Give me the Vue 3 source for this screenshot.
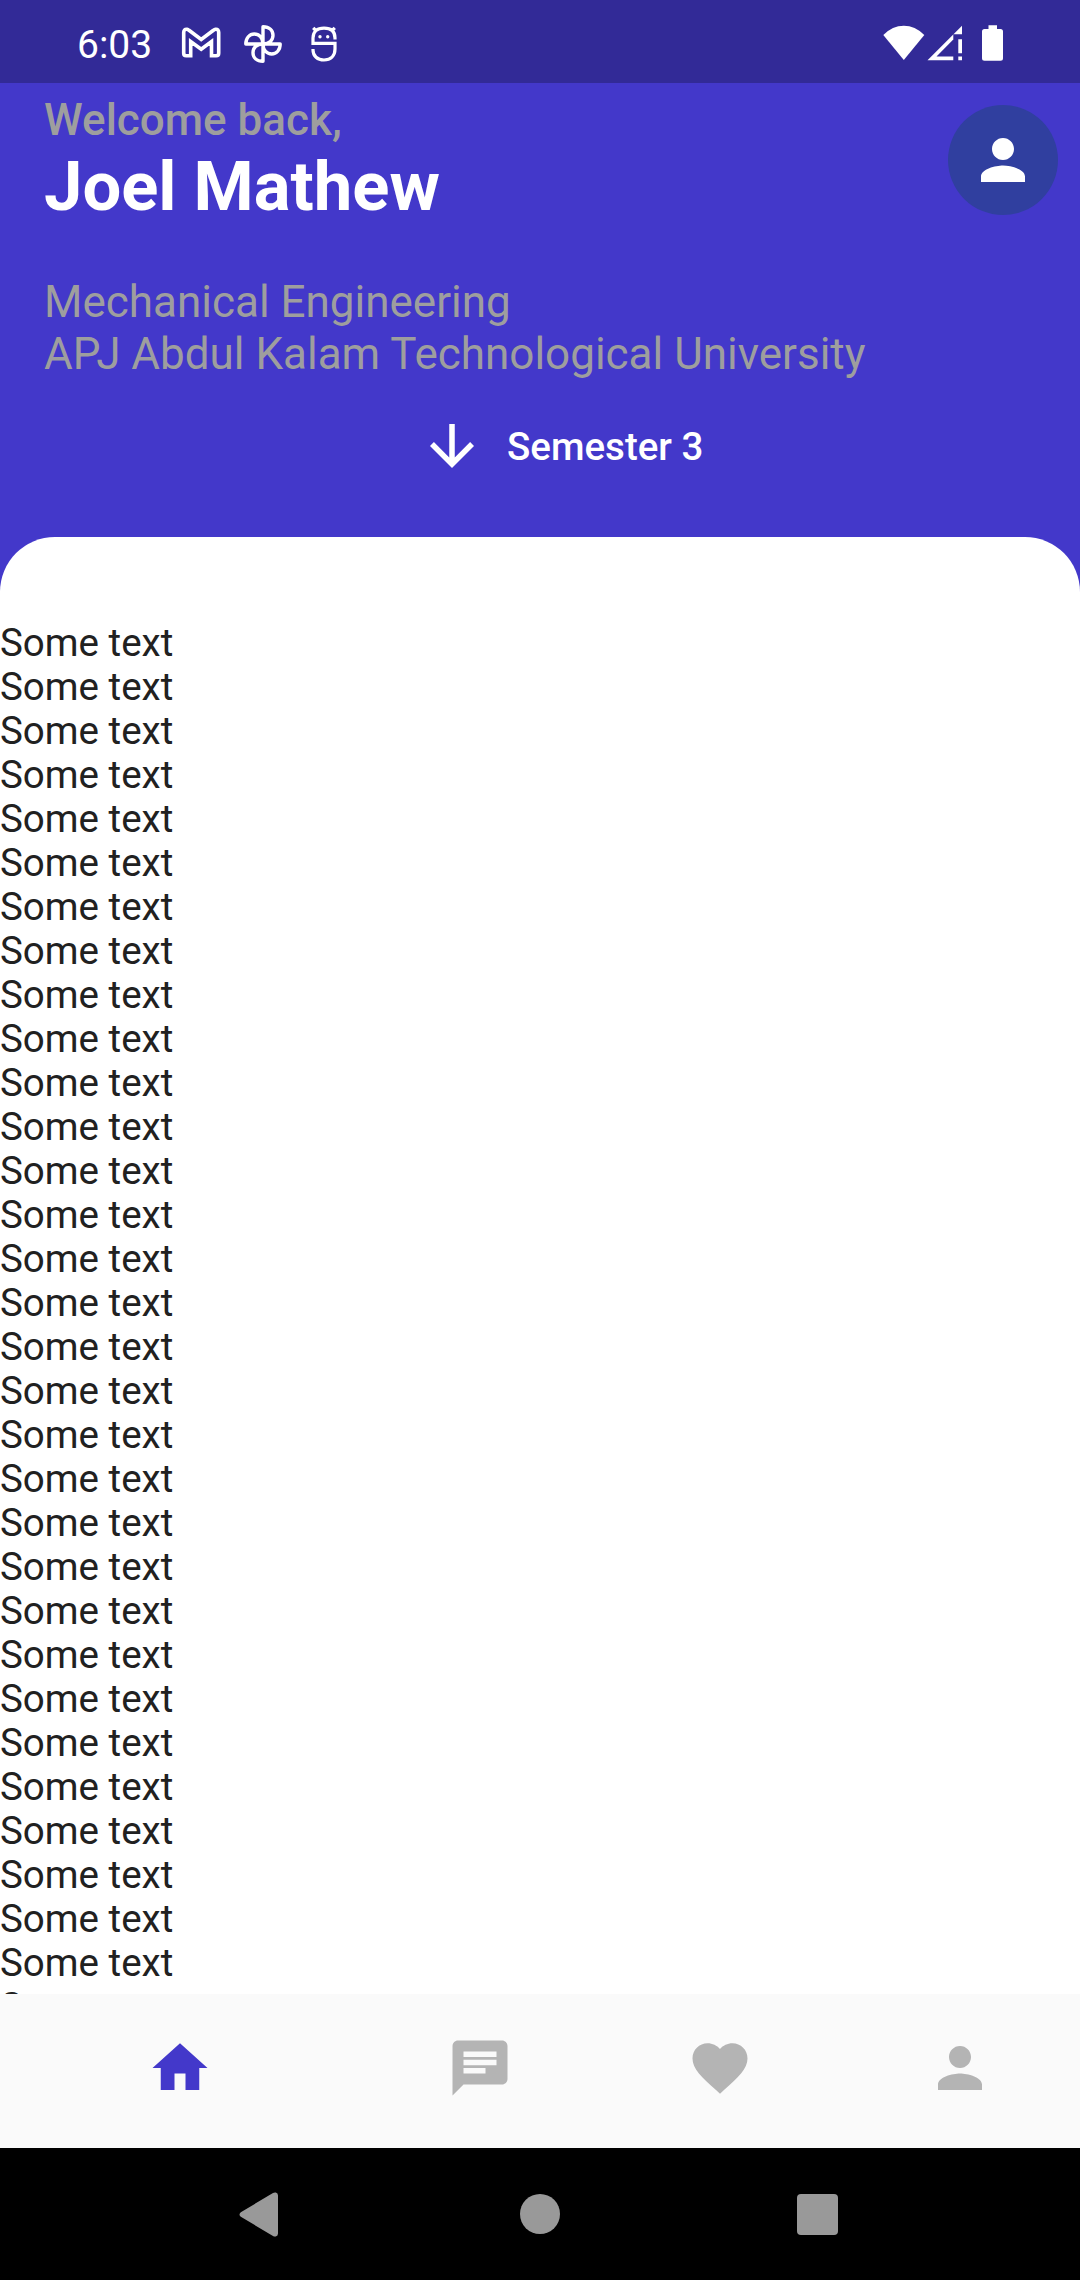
<script setup>
const lines = Array.from({ length: 32 }, () => 'Some text')
const tabs = [
  { name: 'home', active: true, path: 'M10 20v-6h4v6h5v-8h3L12 3 2 12h3v8z' },
  { name: 'chat', active: false, path: 'M20 2H4c-1.1 0-1.99.9-1.99 2L2 22l4-4h14c1.1 0 2-.9 2-2V4c0-1.1-.9-2-2-2zM6 9h12v2H6V9zm8 5H6v-2h8v2zm4-6H6V6h12v2z' },
  { name: 'favorites', active: false, path: 'M12 21.35l-1.45-1.32C5.4 15.36 2 12.28 2 8.5 2 5.42 4.42 3 7.5 3c1.74 0 3.41.81 4.5 2.09C13.09 3.81 14.76 3 16.5 3 19.58 3 22 5.42 22 8.5c0 3.78-3.4 6.86-8.55 11.54L12 21.35z' },
  { name: 'profile', active: false, path: 'M12 12c2.21 0 4-1.79 4-4s-1.79-4-4-4-4 1.79-4 4 1.79 4 4 4zm0 2c-2.67 0-8 1.34-8 4v2h16v-2c0-2.66-5.33-4-8-4z' },
]
</script>

<template>
  <div class="screen">
    <div class="status">
      <span class="time">6:03</span>
      <svg class="gmail" width="40" height="32" viewBox="0 0 40 32">
        <path d="M6.6 28.8H5.2Q2.7 28.8 2.7 26.3V5.6Q2.7 2 6 2.3Q7 2.5 8 3.3L20.2 12.5L32.4 3.3Q33.4 2.5 34.6 2.3Q37.7 2 37.7 5.6V26.3Q37.7 28.8 35.2 28.8H30.5V14.5L20.2 22.3L9.7 14.5V28.8Z" />
      </svg>
      <svg class="photos" width="40" height="40" viewBox="0 0 40 40">
        <path d="M20 20V2.8C26.5 2.8 30 6.5 30 11.3C30 16 26.5 20 20 20ZM20 20H37.2C37.2 26 33.5 30 28.7 30C24 30 20 26.5 20 20ZM20 20V37.2C13.5 37.2 10 33.5 10 28.7C10 24 13.5 20 20 20ZM20 20H2.8C2.8 14 6.5 10 11.3 10C16 10 20 13.5 20 20Z" />
      </svg>
      <svg class="bot" width="28" height="38" viewBox="0 0 28 38">
        <path d="M3.2 2.8L6.4 6M24.8 2.8L21.6 6M25 14.5V13C25 6.5 21 3.2 14 3.2S3 6.5 3 13V18.4H25V24C25 31 20.5 35 14 35S3 31 3 25V24" />
        <circle cx="10" cy="11.8" r="1.7" /><circle cx="17.7" cy="11.8" r="1.7" />
      </svg>
      <div class="system">
        <svg width="42" height="36" viewBox="0 0 42 36"><path d="M0.3 10Q9.5 0.8 20.8 0.8T41.3 10L20.8 35Z" /></svg>
        <svg class="signal" width="36" height="36" viewBox="0 0 36 36">
          <path fill-rule="evenodd" d="M0.5 35.3L35 0.7V9.3H26.3V35.3ZM9.5 31.4H26.3V14.4Z" />
          <path d="M31.3 14.3H35V28.3H31.3ZM31.3 31.6H35V35.3H31.3Z" />
        </svg>
        <svg class="battery" width="22" height="36" viewBox="0 0 22 36"><path d="M6.5 0.3H15V4H18.5Q21 4 21 6.5V33.3Q21 35.8 18.5 35.8H2.5Q0 35.8 0 33.3V6.5Q0 4 2.5 4H6.5Z" /></svg>
      </div>
    </div>

    <header class="header">
      <div class="top">
        <div>
          <div class="welcome">Welcome back,</div>
          <div class="name">Joel Mathew</div>
        </div>
        <div class="avatar">
          <svg width="66" height="66" viewBox="0 0 24 24"><path :d="tabs[3].path" /></svg>
        </div>
      </div>
      <div class="study">
        <div>Mechanical Engineering</div>
        <div>APJ Abdul Kalam Technological University</div>
      </div>
      <div class="semester">
        <svg width="66" height="66" viewBox="0 0 24 24"><path d="M20 12l-1.41-1.41L13 16.17V4h-2v12.17l-5.58-5.59L4 12l8 8 8-8z" /></svg>
        <span>Semester 3</span>
      </div>
    </header>

    <main class="sheet">
      <div v-for="(line, i) in lines" :key="i" class="line">{{ line }}</div>
    </main>

    <nav class="tabs">
      <div v-for="tab in tabs" :key="tab.name" class="tab" :class="{ active: tab.active }">
        <svg width="66" height="66" viewBox="0 0 24 24"><path :d="tab.path" /></svg>
      </div>
    </nav>

    <div class="android">
      <svg width="39" height="45" viewBox="0 0 39 45"><path d="M34 1Q35.4 0.1 36.8 0.5Q39 1.2 39 3.6V41.4Q39 43.8 36.8 44.5Q35.4 44.9 34 44L1.8 24.8Q-0.8 22.5 1.8 20.2Z" /></svg>
      <span class="circle"></span>
      <span class="square"></span>
    </div>
  </div>
</template>

<style>
body { margin: 0; }
</style>

<style scoped>
.screen {
  width: 1080px;
  height: 2280px;
  display: flex;
  flex-direction: column;
  overflow: hidden;
  background: #4338ca;
  color: #fff;
  font-family: Roboto, sans-serif;
}
svg { display: block; flex: none; fill: currentColor; }
.status {
  height: 83px;
  flex: none;
  box-sizing: border-box;
  padding: 0 76px 0 77px;
  display: flex;
  align-items: center;
  background: #322a97;
}
.time { width: 104px; font-size: 39px; line-height: 46px; padding-top: 6px; box-sizing: border-box; white-space: nowrap; }
.gmail, .photos, .bot { fill: none; stroke: #fff; stroke-width: 3.6; }
.gmail { margin-top: 3px; }
.photos { margin: 4px 0 0 22px; stroke-width: 3.4; stroke-linejoin: round; }
.bot { margin: 4px 0 0 27px; stroke-width: 3.2; }
.bot circle { fill: #fff; stroke: none; }
.system { margin-left: auto; display: flex; align-items: center; padding-top: 3px; }
.signal { margin-left: 2px; }
.battery { margin-left: 19px; }
.header { height: 454px; flex: none; box-sizing: border-box; padding: 11px 22px 0 44px; }
.top { display: flex; justify-content: space-between; }
.welcome { font-size: 44px; line-height: 52px; font-weight: 500; color: #9e9e9e; }
.name { font-size: 68.75px; line-height: 81px; font-weight: 700; }
.avatar {
  width: 110px;
  height: 110px;
  margin-top: 11px;
  border-radius: 50%;
  background: #303f9f;
  display: flex;
  align-items: center;
  justify-content: center;
}
.study { margin-top: 49px; font-size: 44px; line-height: 52px; color: #9e9e9e; white-space: nowrap; }
.semester {
  margin: 33px 0 0 375px;
  display: flex;
  align-items: center;
  gap: 22px;
  font-size: 38.5px;
  line-height: 44px;
  font-weight: 500;
}
.semester span { padding-top: 2px; }
.sheet {
  height: 1457px;
  flex: none;
  box-sizing: border-box;
  padding-top: 84px;
  overflow: hidden;
  border-radius: 55px 55px 0 0;
  background: #fff;
  color: #212121;
}
.line { font-size: 38.5px; line-height: 44px; }
.tabs {
  height: 154px;
  flex: none;
  box-sizing: border-box;
  padding-bottom: 6px;
  display: grid;
  grid-template-columns: 360px repeat(3, 240px);
  align-items: center;
  justify-items: center;
  background: #fafafa;
  color: #b4b4b4;
}
.tab.active { color: #4338ca; }
.android {
  height: 132px;
  flex: none;
  box-sizing: border-box;
  padding-left: 239px;
  display: flex;
  align-items: center;
  background: #000;
  color: #999;
}
.circle { width: 40px; height: 40px; margin-left: 242px; border-radius: 50%; background: #999; }
.square { width: 41px; height: 41px; margin-left: 237px; border-radius: 4px; background: #999; }
</style>
